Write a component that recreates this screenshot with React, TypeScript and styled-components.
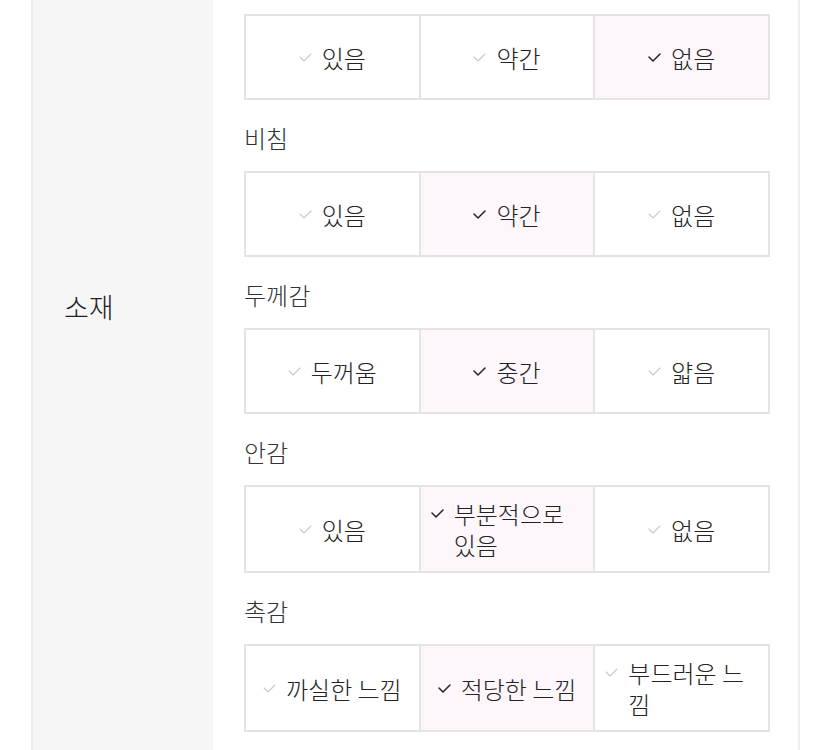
import React from "react";
import styled, { createGlobalStyle } from "styled-components";

const Global = createGlobalStyle`
  html, body { margin: 0; padding: 0; background: #fff; }
  body {
    font-family: "Noto Sans CJK KR", "Noto Sans", sans-serif;
    color: #222;
    overflow: hidden;
  }
`;

const Page = styled.div`
  width: 829px;
  height: 750px;
  overflow: hidden;
  padding-left: 31px;
  box-sizing: border-box;
`;

const Row = styled.div`
  display: flex;
  width: 769px;
  min-height: 750px;
  border-left: 2px solid #ebebeb;
  border-right: 2px solid #efefef;
  box-sizing: border-box;
`;

const Head = styled.div`
  width: 180px;
  flex-shrink: 0;
  background: #f7f6f7;
  padding: 289px 0 0 31px;
  box-sizing: border-box;
  font-size: 27px;
  line-height: 36px;
  font-weight: 300;
  color: #222;
`;

const Body = styled.div`
  flex: 1;
  padding: 14px 28px 0 31px;
  display: flex;
  flex-direction: column;
`;

const GroupLabel = styled.div`
  font-size: 24px;
  line-height: 30px;
  font-weight: 300;
  color: #333;
  padding: 23px 0 18px 0;
`;

const Grid = styled.div`
  display: grid;
  grid-template-columns: repeat(3, 1fr);
  border-top: 2px solid #e4e4e4;
  border-left: 2px solid #e4e4e4;
`;

const Cell = styled.div<{ $on?: boolean }>`
  min-height: 84px;
  border-right: 2px solid #e4e4e4;
  border-bottom: 2px solid #e4e4e4;
  background: ${(p) => (p.$on ? "#fdf7fc" : "#fff")};
  display: flex;
  align-items: center;
  justify-content: center;
  padding: 11px 10px;
  box-sizing: border-box;
`;

const Inner = styled.div`
  display: flex;
  align-items: flex-start;
  gap: 10px;
`;

const Tick = styled.svg<{ $on?: boolean }>`
  width: 13px;
  height: 31px;
  flex-shrink: 0;
  stroke: ${(p) => (p.$on ? "#222" : "#c9c9c9")};
  stroke-width: ${(p) => (p.$on ? 1.5 : 1.1)};
  fill: none;
`;

const Text = styled.span`
  font-size: 24px;
  line-height: 31px;
  font-weight: 300;
  color: #222;
  max-width: 133px;
`;

type Group = { label?: string; options: string[]; selected: number };

const groups: Group[] = [
  { options: ["있음", "약간", "없음"], selected: 2 },
  { label: "비침", options: ["있음", "약간", "없음"], selected: 1 },
  { label: "두께감", options: ["두꺼움", "중간", "얇음"], selected: 1 },
  { label: "안감", options: ["있음", "부분적으로 있음", "없음"], selected: 1 },
  { label: "촉감", options: ["까실한 느낌", "적당한 느낌", "부드러운 느낌"], selected: 1 },
];

const Check = ({ on }: { on?: boolean }) => (
  <Tick $on={on} viewBox="0 0 13 31">
    <polyline points="1,15 5,19 12,12" strokeLinecap="round" strokeLinejoin="round" />
  </Tick>
);

export default function App() {
  return (
    <Page>
      <Global />
      <Row>
        <Head>소재</Head>
        <Body>
          {groups.map((g, gi) => (
            <React.Fragment key={gi}>
              {g.label && <GroupLabel>{g.label}</GroupLabel>}
              <Grid>
                {g.options.map((o, i) => (
                  <Cell key={o} $on={i === g.selected}>
                    <Inner>
                      <Check on={i === g.selected} />
                      <Text>{o}</Text>
                    </Inner>
                  </Cell>
                ))}
              </Grid>
            </React.Fragment>
          ))}
        </Body>
      </Row>
    </Page>
  );
}
